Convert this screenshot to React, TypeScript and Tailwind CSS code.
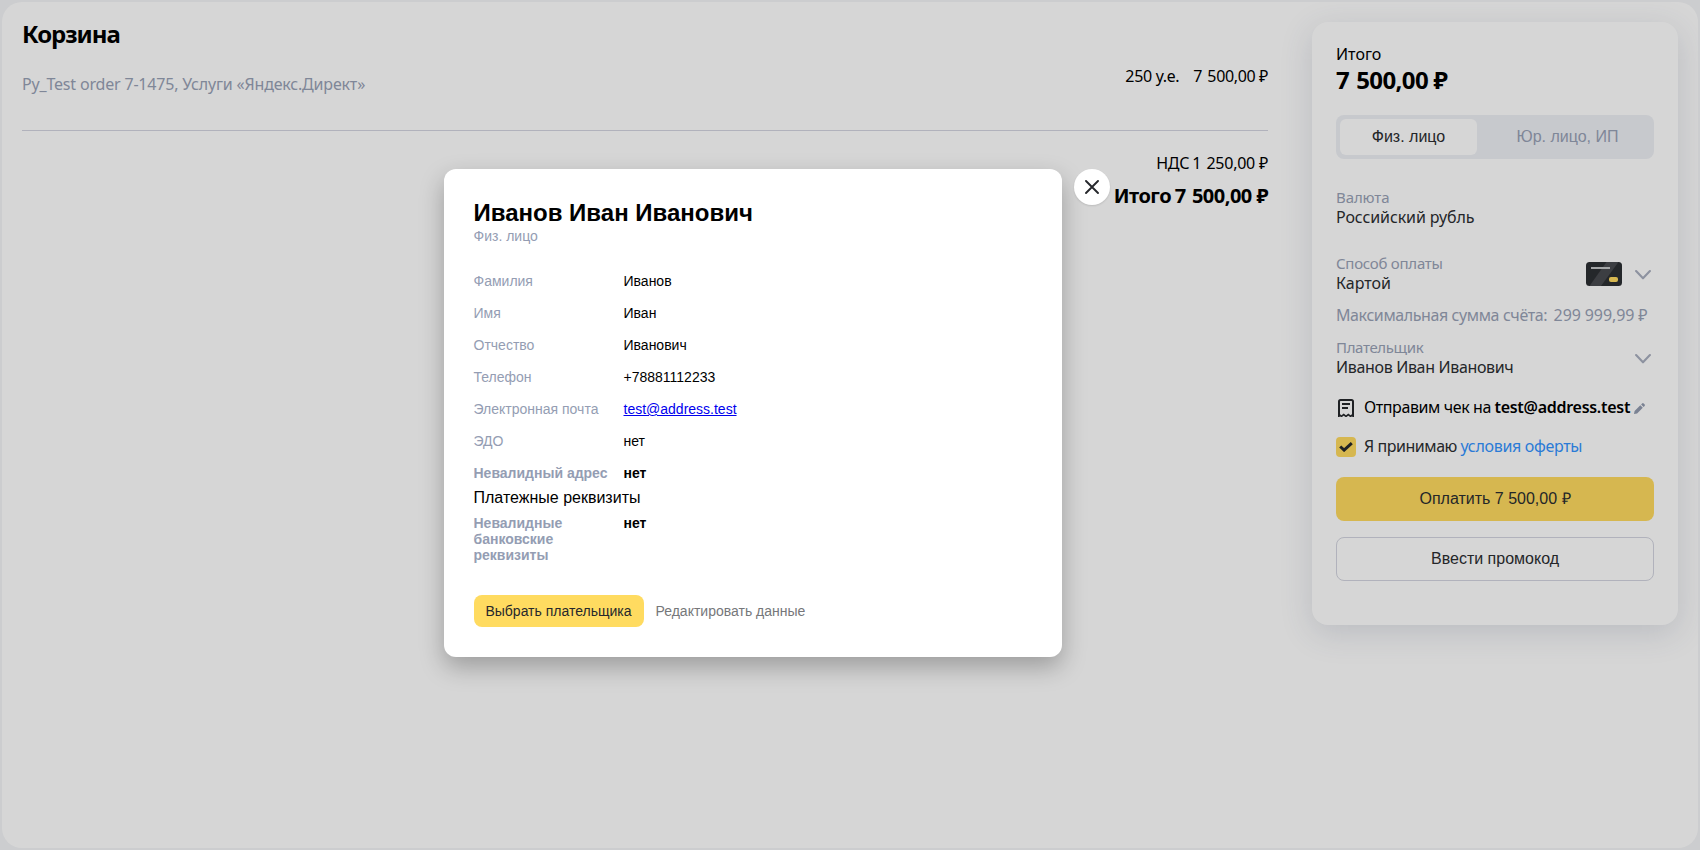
import type { ReactNode } from "react";

function Chevron() {
  return (
    <svg className="mt-0.5 mr-[3px] h-[10px] w-4" viewBox="0 0 16 10" fill="none" stroke="#a9afbf" strokeWidth="2.1" strokeLinecap="round" strokeLinejoin="round">
      <path d="M1.1 1.1 8 8.300l6.900-7.200" />
    </svg>
  );
}

function BankCard() {
  return (
    <svg className="h-6 w-9" viewBox="0 0 36 24">
      <rect width="36" height="24" rx="3.5" fill="#2c2f33" />
      <path d="M20.500 0h12L15 24H3.500z" fill="#484a4f" />
      <path d="M5 5h19v2H5z" fill="#c4c6c8" />
      <rect x="23" y="15" width="9" height="5" rx="2" fill="#ffdb60" />
    </svg>
  );
}

function Receipt() {
  return (
    <svg className="h-[18px] w-4" viewBox="0 0 16 18" fill="none" stroke="#26282c" strokeWidth="2">
      <path d="M1 17.800V2.500Q1 1 2.500 1h11Q15 1 15 2.500v15.300" />
      <path d="M4 5h8M4 9h6" />
      <path d="m0 18 1.200-2.400 2.200 1.800L5.700 15.600l2.300 1.800 2.300-1.800 2.300 1.800 2.200-1.800L16 18" strokeWidth="1.600" />
    </svg>
  );
}

function Pencil() {
  return (
    <svg className="ml-1 h-[11px] w-[11px]" viewBox="0 0 11 11" fill="#929bb0">
      <path d="M0 11 .6 7.900 6.300 2.200l2.500 2.500-5.700 5.700zM7.100 1.400 8.100.4Q8.900-.3 9.700.5l.8.8q.8.800.1 1.600l-1 1z" />
    </svg>
  );
}

function Price({ value }: { value: string }) {
  return (
    <>
      <span className="[word-spacing:1.5px]">{value}</span>
      <span> ₽</span>
    </>
  );
}

function Field({ label, children, extra }: { label: ReactNode; children: ReactNode; extra?: ReactNode }) {
  return (
    <div className="flex h-10 items-center justify-between">
      <div>
        <div className="h-[19px] text-[15px] leading-[19px] text-[#98a1b5]">{label}</div>
        <div className="h-5 text-base leading-5 text-[#2c2e31]">{children}</div>
      </div>
      <div className="mt-0.5 flex items-center gap-[13px]">{extra}</div>
    </div>
  );
}

function Row({ label, bold, children }: { label: string; bold?: boolean; children: ReactNode }) {
  return (
    <div className={bold ? "flex font-bold" : "flex"}>
      <dt className="w-[150px] pr-2 text-[#949db3]">{label}</dt>
      <dd>{children}</dd>
    </div>
  );
}

function Cart() {
  return (
    <main className="w-[1246px] text-black">
      <h1 className="text-2xl leading-6 font-bold tracking-[-1.02px]">Корзина</h1>
      <div className="flex h-[85px] justify-between border-b border-[#d3d5e0] pt-5">
        <p className="pt-2 text-base leading-5 tracking-[-0.18px] text-[#98a1b5]">
          Py_Test order 7-1475, Услуги «Яндекс.Директ»
        </p>
        <p className="flex gap-[14px] text-base leading-5">
          <span className="tracking-[-0.32px]">250 у.е.</span>
          <span className="tracking-[-0.36px]"><Price value="7 500,00" /></span>
        </p>
      </div>
      <div className="pt-[22px] text-right">
        <p className="text-base leading-5 tracking-[-0.25px]">
          <span className="[word-spacing:-1px]">НДС </span>
          <Price value="1 250,00" />
        </p>
        <p className="pt-[11px] text-xl leading-6 font-bold tracking-[-0.5px]">
          <span className="[word-spacing:-1px]">Итого </span>
          <Price value="7 500,00" />
        </p>
      </div>
    </main>
  );
}

function Summary() {
  return (
    <aside className="h-[603px] w-[366px] rounded-2xl bg-white px-6 pt-[22px] shadow-[0_8px_32px_rgba(60,72,108,0.17)]">
      <p className="text-base leading-5">Итого</p>
      <p className="pt-[1px] text-2xl leading-[30px] font-bold tracking-[-0.62px]"><Price value="7 500,00" /></p>

      <div className="mt-5 flex h-11 rounded-lg bg-[#eef0f5] p-1 font-['Liberation_Sans',sans-serif] text-base">
        <div className="flex w-[137px] items-center justify-center rounded-md bg-white text-[#2c2e31]">Физ. лицо</div>
        <div className="flex flex-1 items-center justify-center pl-2 text-[#98a1b5]">Юр. лицо, ИП</div>
      </div>

      <div className="pt-7">
        <Field label={<span className="tracking-[-0.1px]">Валюта</span>}>
          <span className="tracking-[-0.1px]">Российский рубль</span>
        </Field>
      </div>
      <div className="pt-[26px]">
        <Field
          label={<span className="tracking-[-0.25px]">Способ оплаты</span>}
          extra={
            <>
              <BankCard />
              <Chevron />
            </>
          }
        >
          Картой
        </Field>
      </div>
      <p className="flex gap-[6px] pt-3 text-base leading-5 text-[#98a1b5]">
        <span className="tracking-[-0.4px]">Максимальная сумма счёта:</span>
        <span className="pl-[0.5px] tracking-[-0.1px]">299 999,99 ₽</span>
      </p>
      <div className="pt-3">
        <Field label={<span className="tracking-[-0.35px]">Плательщик</span>} extra={<Chevron />}>
          <span className="tracking-[-0.34px]">Иванов Иван Иванович</span>
        </Field>
      </div>

      <div className="flex items-start pt-5 pl-0.5 text-base leading-5">
        <div className="pt-[2px]"><Receipt /></div>
        <span className="pl-[10px] tracking-[-0.4px]">Отправим чек на</span>
        <span className="pl-[3.5px] font-semibold tracking-[-0.28px]">test@address.test</span>
        <div className="pt-[6px]"><Pencil /></div>
      </div>

      <div className="flex items-start pt-[19px] text-base leading-5">
        <span className="mt-px flex size-5 items-center justify-center rounded bg-[#ffdb60]">
          <svg className="h-[10px] w-[14px]" viewBox="0 0 14 10" fill="none" stroke="#26282c" strokeWidth="3">
            <path d="m1.200 4.500 3.900 3.600 7.700-7" />
          </svg>
        </span>
        <span className="pl-2 tracking-[-0.45px] text-[#2c2e31]">Я принимаю</span>
        <a className="pl-[3.5px] tracking-[-0.31px] text-[#3393ff]">условия оферты</a>
      </div>

      <div className="flex flex-col gap-4 pt-5 font-['Liberation_Sans',sans-serif] text-base text-[#2c2e31]">
        <button className="h-11 rounded-lg bg-[#ffdb60]">Оплатить 7 500,00 ₽</button>
        <button className="h-11 rounded-lg border border-[#d3d5e0]">Ввести промокод</button>
      </div>
    </aside>
  );
}

function PayerDialog() {
  return (
    <div className="absolute inset-0 flex items-start justify-start gap-3 bg-black/16 pt-[169px] pl-[444px] font-['Liberation_Sans',sans-serif] text-black">
      <section className="h-[488px] w-[618px] rounded-xl bg-white px-[29.5px] pt-[30px] shadow-[0_10px_24px_rgba(0,0,0,0.27)]">
        <h2 className="text-2xl leading-7 font-bold">Иванов Иван Иванович</h2>
        <p className="pt-px text-sm leading-4 text-[#949db3]">Физ. лицо</p>

        <dl className="flex flex-col gap-4 pt-[29px] text-sm leading-4">
          <Row label="Фамилия">Иванов</Row>
          <Row label="Имя">Иван</Row>
          <Row label="Отчество">Иванович</Row>
          <Row label="Телефон">+78881112233</Row>
          <Row label="Электронная почта">
            <a className="text-[#0000ee] underline">test@address.test</a>
          </Row>
          <Row label="ЭДО">нет</Row>
          <Row label="Невалидный адрес" bold>нет</Row>
        </dl>
        <h3 className="pt-2 text-base leading-[18px]">Платежные реквизиты</h3>
        <dl className="pt-2 text-sm leading-4">
          <Row label="Невалидные банковские реквизиты" bold>нет</Row>
        </dl>

        <div className="flex items-center gap-3 pt-8 text-sm">
          <button className="h-8 w-[170px] rounded-lg bg-[#ffdb60] text-[#26282c]">Выбрать плательщика</button>
          <button className="text-[#76777a]">Редактировать данные</button>
        </div>
      </section>
      <button className="flex size-9 items-center justify-center rounded-full bg-white shadow-[0_1px_2px_rgba(0,0,0,0.12)]" aria-label="Закрыть">
        <svg className="size-[14px]" viewBox="0 0 14 14" fill="none" stroke="#26282c" strokeWidth="1.900" strokeLinecap="round">
          <path d="m1 1 12 12M13 1 1 13" />
        </svg>
      </button>
    </div>
  );
}

export default function App() {
  return (
    <div className="relative h-[850px] w-[1700px] overflow-hidden bg-[#f4f5f7] p-0.5 font-['Noto_Sans',sans-serif]">
      <div className="flex h-[846px] w-[1696px] gap-11 overflow-hidden rounded-[20px] bg-white px-5 pt-5">
        <Cart />
        <Summary />
      </div>
      <PayerDialog />
    </div>
  );
}
